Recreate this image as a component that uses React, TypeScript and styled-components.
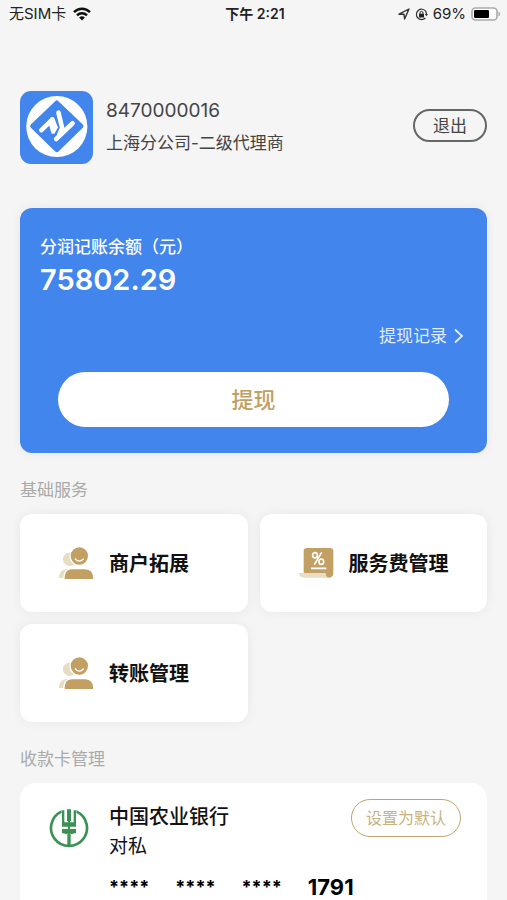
import React from "react";
import styled, { createGlobalStyle } from "styled-components";

const GlobalStyle = createGlobalStyle`
  *, *::before, *::after { box-sizing: border-box; }
  body {
    margin: 0;
    background: #f5f5f5;
    font-family: Inter, "Noto Sans CJK SC", sans-serif;
    color: #333;
  }
  button { font-family: inherit; cursor: pointer; }
  h1, h2, h3, p { margin: 0; font-weight: 400; }
`;

const Screen = styled.div`
  height: 100vh;
  overflow-y: auto;
  scrollbar-width: none;
  background: #f5f5f5;
`;

const StatusBar = styled.header`
  display: grid;
  grid-template-columns: 1fr auto 1fr;
  align-items: center;
  height: 28px;
  padding: 0 6px 0 9px;
  color: #222;
  font-size: 15px;
  line-height: 20px;
`;

const StatusGroup = styled.div<{ $end?: boolean }>`
  display: flex;
  align-items: center;
  gap: ${(p) => (p.$end ? 5 : 7)}px;
  justify-content: ${(p) => (p.$end ? "flex-end" : "flex-start")};
`;

const Clock = styled.time`
  font-size: 14px;
  font-weight: 600;
`;

const Content = styled.main`
  padding: 63px 20px 40px;
`;

const Profile = styled.section`
  display: flex;
  align-items: center;
  gap: 13px;
`;

const ProfileText = styled.div`
  flex: 1;
  padding-bottom: 2px;
  color: #444;
`;

const AccountNumber = styled.h1`
  font-size: 19px;
  line-height: 32px;
`;

const AccountRole = styled.p`
  font-size: 17px;
  line-height: 32px;
`;

const PillButton = styled.button<{ $gold?: boolean }>`
  flex: none;
  height: ${(p) => (p.$gold ? 38 : 33)}px;
  margin-bottom: ${(p) => (p.$gold ? 0 : 4)}px;
  padding: 0 ${(p) => (p.$gold ? 14 : 18)}px;
  border: ${(p) => (p.$gold ? "1px solid #c2a56c" : "2px solid #666")};
  border-radius: 20px;
  background: transparent;
  color: ${(p) => (p.$gold ? "#c8b280" : "#444")};
  font-size: ${(p) => (p.$gold ? 16 : 17)}px;
  line-height: 24px;
`;

const BalanceCard = styled.section`
  display: flex;
  flex-direction: column;
  margin-top: 44px;
  padding: 25px 20px 26px;
  border-radius: 12px;
  background: #4285ed;
  color: #fff;
  box-shadow: 0 0 12px rgba(0, 0, 0, 0.06);
`;

const BalanceLabel = styled.h2`
  font-size: 17px;
  line-height: 28px;
  font-weight: 500;
`;

const BalanceAmount = styled.p`
  font-size: 29px;
  line-height: 38px;
  font-weight: 600;
`;

const RecordsLink = styled.a`
  display: flex;
  align-items: center;
  align-self: flex-end;
  gap: 6px;
  margin: 24px 3px 0 0;
  color: #e1ecff;
  font-size: 17px;
  line-height: 26px;
  text-decoration: none;
`;

const WithdrawButton = styled.button`
  height: 55px;
  margin: 23px 18px 0;
  border: 0;
  border-radius: 28px;
  background: #fff;
  color: #c2a063;
  font-size: 22px;
  line-height: 32px;
  font-weight: 500;
`;

const SectionTitle = styled.h2`
  margin: 24px 0 11px;
  color: #aaa;
  font-size: 17px;
  line-height: 26px;
`;

const ServiceGrid = styled.section`
  display: grid;
  grid-template-columns: 1fr 1fr;
  gap: 12px;
`;

const ServiceCard = styled.button`
  display: flex;
  align-items: center;
  gap: 15px;
  height: 98px;
  padding: 2px 16px 0 39px;
  border: 0;
  border-radius: 12px;
  background: #fff;
  box-shadow: 0 0 12px rgba(0, 0, 0, 0.06);
  color: #111;
  font-size: 20px;
  line-height: 30px;
  font-weight: 600;
`;

const BankCard = styled.article`
  display: grid;
  grid-template-columns: auto 1fr auto;
  column-gap: 20px;
  padding: 16px 26px 28px 29px;
  border-radius: 16px;
  background: #fff;
  color: #111;
`;

const BankMark = styled.div`
  padding-top: 10px;
`;

const BankText = styled.div`
  padding-top: 2px;
`;

const BankName = styled.h3`
  font-size: 20px;
  line-height: 32px;
  font-weight: 500;
`;

const BankType = styled.p`
  font-size: 19px;
  line-height: 28px;
`;

const CardNumber = styled.p`
  display: flex;
  align-items: center;
  grid-column: 2 / -1;
  gap: 26px;
  margin-top: 14px;
  color: #000;
  font-size: 18px;
  line-height: 24px;
  font-weight: 700;
`;

const LastDigits = styled.span`
  font-size: 22px;
`;

const WifiIcon = () => (
  <svg width="18" height="14" viewBox="0 0 18 14" aria-hidden="true">
    <g fill="none" stroke="#111" strokeWidth="2.5">
      <path d="M1 5.2C5.5 .5 12.5 .5 17 5.2" />
      <path d="M4 8.4C6.8 5.6 11.2 5.6 14 8.4" />
    </g>
    <path d="M6.1 10.4C8 8.8 10 8.8 11.9 10.4L9 13.4Z" fill="#111" />
  </svg>
);

const LocationIcon = () => (
  <svg width="12" height="12" viewBox="0 0 12 12" aria-hidden="true">
    <path d="M1 6.2 11 1 6.6 11 6 6.3Z" fill="none" stroke="#333" strokeWidth="1.4" strokeLinejoin="round" />
  </svg>
);

const RotationLockIcon = () => (
  <svg width="13" height="13" viewBox="0 0 13 13" aria-hidden="true">
    <path d="M10.7 3.2A5.2 5.2 0 1 0 10.4 10M11.4 6.5A5.2 5.2 0 0 0 10.7 3.2" fill="none" stroke="#333" strokeWidth="1.2" />
    <path d="M9.8 6h3.2L11.5 8.2Z" fill="#333" />
    <rect x="4" y="5.8" width="5" height="3.7" rx=".6" fill="#222" />
    <path d="M5 6V4.9a1.5 1.5 0 0 1 3 0V6" fill="none" stroke="#222" />
  </svg>
);

const BatteryIcon = () => (
  <svg width="30" height="14" viewBox="0 0 30 14" aria-hidden="true">
    <rect x="1" y="1" width="25" height="12" rx="3.5" fill="#fff" stroke="#aaa" strokeWidth="1.6" />
    <rect x="3" y="3" width="15" height="8" rx="1.2" fill="#000" />
    <path d="M27.5 4.8q1.7.5 1.7 2.2t-1.7 2.2Z" fill="#aaa" />
  </svg>
);

const BrandLogo = () => (
  <svg width="73" height="73" viewBox="0 0 222 222" role="img" aria-label="公司标志">
    <rect width="222" height="222" rx="34" fill="#4285ed" />
    <circle cx="112" cy="108" r="93" fill="#fff" />
    <path d="M107 31q5-5 10 0l74 71q5 5 0 10l-74 72q-5 5-10 0l-74-72q-5-5 0-10Z" fill="#4285ed" />
    <g fill="none" stroke="#fff" strokeWidth="14" strokeLinecap="round" strokeLinejoin="round">
      <path d="M65 119 98 87" />
      <path d="M117 66 128 112 119 134" />
      <path d="M110 146 160 98" />
    </g>
    <path d="M92 82Q99 76 105 83L116 111 105 130H96L87 98Z" fill="#fff" />
    <path d="M105 77 118 111 104 138" fill="none" stroke="#4285ed" strokeWidth="4" />
  </svg>
);

const ChevronIcon = () => (
  <svg width="11" height="16" viewBox="0 0 11 16" aria-hidden="true">
    <path d="M2 1.5 9 8 2 14.5" fill="none" stroke="#e1ecff" strokeWidth="1.8" />
  </svg>
);

const PeopleIcon = () => (
  <svg width="35" height="34" viewBox="0 0 105 102" aria-hidden="true">
    <circle cx="32" cy="37" r="20" fill="#e5dcc2" />
    <path d="M0 93V88Q2 67 26 65L46 93Z" fill="#e5dcc2" />
    <circle cx="61" cy="27" r="28" fill="#c2a063" stroke="#fff" strokeWidth="4" />
    <path d="M49 36q12 13 24 0" fill="none" stroke="#fff" strokeWidth="4" strokeLinecap="round" />
    <path d="M15 98V89Q17 65 39 65H78Q102 66 104 89V98Z" fill="#c2a063" stroke="#fff" strokeWidth="4" />
  </svg>
);

const FeeIcon = () => (
  <svg width="35" height="32" viewBox="0 0 105 96" aria-hidden="true">
    <path d="M14 74V8Q14 0 24 0H93Q103 0 103 10V74Q103 89 88 89Z" fill="#c2a063" />
    <path d="M0 75H80Q80 88 91 89H15Q2 89 0 75Z" fill="#eadcc5" />
    <g fill="none" stroke="#fff" strokeWidth="5">
      <ellipse cx="48" cy="22" rx="7" ry="8" />
      <ellipse cx="67" cy="41" rx="7" ry="8" />
      <path d="M68 13 46 50M36 61H82" />
    </g>
  </svg>
);

const BankLogo = () => (
  <svg width="40" height="40" viewBox="0 0 120 120" role="img" aria-label="农行标志">
    <path d="M37 8A54 54 0 1 0 83 8" fill="none" stroke="#3b9254" strokeWidth="8" />
    <g fill="#3b9254">
      <path d="M54 1H66V36H54ZM37 4H46V40H58V53H39V12ZM83 4H74V40H62V53H81V12Z" />
      <path d="M39 60H58V72L54 76 39 72ZM81 60H62V72L66 76 81 72Z" />
      <path d="M55 76H65V114H55ZM57 36H63V80H57Z" />
    </g>
  </svg>
);

const services = [
  { name: "商户拓展", Icon: PeopleIcon },
  { name: "服务费管理", Icon: FeeIcon },
  { name: "转账管理", Icon: PeopleIcon },
];

const maskedGroups = ["****", "****", "****"];

export default function App() {
  return (
    <Screen>
      <GlobalStyle />
      <StatusBar>
        <StatusGroup>
          <span>无SIM卡</span>
          <WifiIcon />
        </StatusGroup>
        <Clock>下午 2:21</Clock>
        <StatusGroup $end>
          <LocationIcon />
          <RotationLockIcon />
          <span>69%</span>
          <BatteryIcon />
        </StatusGroup>
      </StatusBar>
      <Content>
        <Profile>
          <BrandLogo />
          <ProfileText>
            <AccountNumber>8470000016</AccountNumber>
            <AccountRole>上海分公司-二级代理商</AccountRole>
          </ProfileText>
          <PillButton type="button">退出</PillButton>
        </Profile>
        <BalanceCard>
          <BalanceLabel>分润记账余额（元）</BalanceLabel>
          <BalanceAmount>75802.29</BalanceAmount>
          <RecordsLink href="#records">
            提现记录
            <ChevronIcon />
          </RecordsLink>
          <WithdrawButton type="button">提现</WithdrawButton>
        </BalanceCard>
        <SectionTitle>基础服务</SectionTitle>
        <ServiceGrid>
          {services.map(({ name, Icon }) => (
            <ServiceCard type="button" key={name}>
              <Icon />
              {name}
            </ServiceCard>
          ))}
        </ServiceGrid>
        <SectionTitle>收款卡管理</SectionTitle>
        <BankCard>
          <BankMark>
            <BankLogo />
          </BankMark>
          <BankText>
            <BankName>中国农业银行</BankName>
            <BankType>对私</BankType>
          </BankText>
          <PillButton type="button" $gold>
            设置为默认
          </PillButton>
          <CardNumber>
            {maskedGroups.map((group, i) => (
              <span key={i}>{group}</span>
            ))}
            <LastDigits>1791</LastDigits>
          </CardNumber>
        </BankCard>
      </Content>
    </Screen>
  );
}
